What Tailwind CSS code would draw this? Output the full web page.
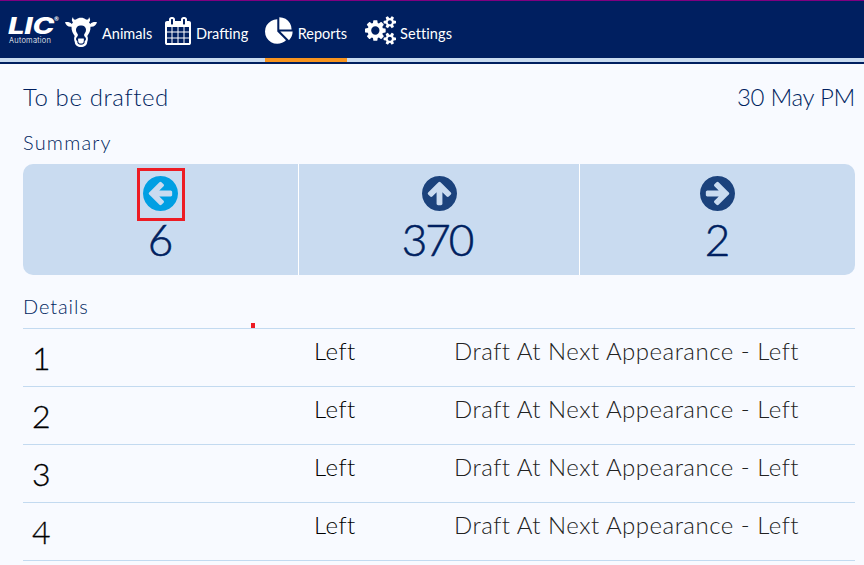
<!DOCTYPE html>
<html lang="en">
<head>
<meta charset="utf-8">
<title>LIC Automation - Reports</title>
<script src="https://cdn.jsdelivr.net/npm/@tailwindcss/browser@4"></script>
</head>
<body class="h-[565px] w-[864px] overflow-hidden bg-[#f8faff] font-['Lato','Open_Sans',sans-serif] font-light text-[#001f60]">
<svg class="hidden">
  <symbol id="arrow" viewBox="128 128 1536 1536"><path d="M1408 960v-128q0-26-19-45t-45-19h-502l189-189q19-19 19-45t-19-45l-91-91q-18-18-45-18t-45 18l-362 362-91 91q-18 18-18 45t18 45l91 91 362 362q18 18 45 18t45-18l91-91q18-18 18-45t-18-45l-189-189h502q26 0 45-19t19-45zm256-64q0 209-103 385.500t-279.500 279.500-385.500 103-385.500-103-279.500-279.500-103-385.500 103-385.500 279.500-279.500 385.500-103 385.500 103 279.500 279.500 103 385.500z"/></symbol>
</svg>
<header class="h-16 border-t border-b-2 border-t-[#800080] border-b-[#001f60] bg-[#001f60] text-white">
  <div class="flex h-[61px] border-b-4 border-[#c9dbf0] pl-2">
    <div class="w-[57px] pt-[14px]">
      <div class="flex h-[20px] items-start">
        <span class="inline-block w-[46px] origin-left scale-x-[1.25] font-['Inter'] text-[23.500px] leading-[22px] font-extrabold tracking-[-0.2px] italic">LIC</span>
        <span class="text-[6px] leading-[8px] font-bold">®</span>
      </div>
      <div class="pt-px pl-px font-['Inter'] text-[7.500px] leading-[10px] font-light tracking-[0.25px]">Automation</div>
    </div>
    <nav class="flex text-[14.500px] font-normal">
      <a class="flex h-[61px] w-[100px]">
        <svg class="mt-[15px] h-8 w-8" viewBox="0 0 32 32" fill="#fff">
          <path d="M8 1C6.600 2.800 6.400 5 8 6.300L6.800 8C5 6 2 5.800 0 6.300C.8 9.300 3 11 6.500 10.700C6.300 14.500 8 17.500 9.700 20C8.800 22 9 24 9.800 26C10 29.500 12.500 31 16 31S22 29.500 22.200 26C23 24 23.200 22 22.300 20C24 17.500 25.700 14.500 25.500 10.700C29 11 31.200 9.300 32 6.300C30 5.800 27 6 25.200 8L24 6.300C25.600 5 25.400 2.800 24 1C24 3 22.800 4 21 3.500C19.500 2.300 18 1.800 16 1.800S12.500 2.300 11 3.500C9.200 4 8 3 8 1Z"/>
          <path fill="#001f60" d="M12.500 10.500C14 9.300 18 9.300 19.500 10.500C21.500 12 21.500 15.500 19.700 17.500C18.500 19 19.200 20 20.500 21.500C21.500 23 20.800 24.500 19.700 25C20 27.500 18.500 28.700 16 28.700S12 27.500 12.300 25C11.200 24.500 10.500 23 11.500 21.500C12.800 20 13.500 19 12.300 17.500C10.500 15.500 10.500 12 12.500 10.500Z"/>
          <path d="M13.300 22.500H18.700C19.200 23.800 18.700 25 18.600 26C18.300 27.300 17.500 27.600 16 27.600S13.700 27.300 13.400 26C13.300 25 12.800 23.800 13.300 22.500Z"/>
        </svg>
        <span class="ml-[5px] pt-[23px] leading-5">Animals</span>
      </a>
      <a class="flex h-[61px] w-[100px]">
        <svg class="mt-[16px] h-7 w-[26px]" viewBox="64 0 1664 1792" fill="#fff"><path d="M192 1664h288v-288h-288v288zm352 0h320v-288h-320v288zm-352-352h288v-320h-288v320zm352 0h320v-320h-320v320zm-352-384h288v-288h-288v288zm736 736h320v-288h-320v288zm-384-736h320v-288h-320v288zm768 736h288v-288h-288v288zm-384-352h320v-320h-320v320zm-352-864v-288q0-13-9.500-22.500t-22.500-9.500h-64q-13 0-22.500 9.500t-9.500 22.500v288q0 13 9.500 22.500t22.500 9.500h64q13 0 22.500-9.500t9.500-22.500zm736 864h288v-320h-288v320zm-384-384h320v-288h-320v288zm384 0h288v-288h-288v288zm32-480v-288q0-13-9.500-22.500t-22.500-9.500h-64q-13 0-22.500 9.500t-9.500 22.500v288q0 13 9.500 22.500t22.500 9.500h64q13 0 22.500-9.500t9.500-22.500zm384-64v1280q0 52-38 90t-90 38h-1408q-52 0-90-38t-38-90v-1280q0-52 38-90t90-38h128v-96q0-66 47-113t113-47h64q66 0 113 47t47 113v96h384v-96q0-66 47-113t113-47h64q66 0 113 47t47 113v96h128q52 0 90 38t38 90z"/></svg>
        <span class="ml-[5px] pt-[23px] leading-5">Drafting</span>
      </a>
      <a class="flex h-[61px] w-[82px] border-b-4 border-[#f7931e]">
        <svg class="mt-[16px] h-[27px] w-7" viewBox="0 0 1728 1664" fill="#fff"><path d="M768 890l546 546q-106 108-247.500 168t-298.500 60q-209 0-385.500-103t-279.500-279.500-103-385.500 103-385.500 279.500-279.500 385.500-103v762zm187 6h773q0 157-60 298.500t-168 247.500zm709-128h-768v-768q209 0 385.500 103t279.500 279.500 103 385.500z"/></svg>
        <span class="ml-[5px] pt-[23px] leading-5">Reports</span>
      </a>
      <a class="ml-[18px] flex h-[61px]">
        <svg class="mt-[15px] h-[29px] w-[31px]" viewBox="-64 0 1920 1792" fill="#fff"><path d="M832 896q0-106-75-181t-181-75-181 75-75 181 75 181 181 75 181-75 75-181zm768 512q0-52-38-90t-90-38-90 38-38 90q0 53 37.500 90.500t90.500 37.500 90.500-37.500 37.500-90.500zm0-1024q0-52-38-90t-90-38-90 38-38 90q0 53 37.500 90.500t90.500 37.500 90.500-37.500 37.500-90.500zm-384 421v185q0 10-7 19.500t-16 10.500l-155 24q-11 35-32 76 34 48 90 115 7 11 7 20 0 12-7 19-23 30-82.500 89.500t-78.500 59.500q-11 0-21-7l-115-90q-37 19-77 31-11 108-23 155-7 24-30 24h-186q-11 0-20-7.500t-10-17.500l-23-153q-34-10-75-31l-118 89q-7 7-20 7-11 0-21-8-144-133-144-160 0-9 7-19 10-14 41-53t47-61q-23-44-35-82l-152-24q-10-1-17-9.500t-7-19.500v-185q0-10 7-19.500t16-10.500l155-24q11-35 32-76-34-48-90-115-7-11-7-20 0-12 7-20 22-30 82-89t79-59q11 0 21 7l115 90q34-18 77-32 11-108 23-154 7-24 30-24h186q11 0 20 7.500t10 17.500l23 153q34 10 75 31l118-89q8-7 20-7 11 0 21 8 144 133 144 160 0 8-7 19-12 16-42 54t-45 60q23 48 34 82l152 23q10 2 17 10.500t7 19.500zm640 533v140q0 16-149 31-12 27-30 52 51 113 51 138 0 4-4 7-122 71-124 71-8 0-46-47t-52-68q-20 2-30 2t-30-2q-14 21-52 68t-46 47q-2 0-124-71-4-3-4-7 0-25 51-138-18-25-30-52-149-15-149-31v-140q0-16 149-31 13-29 30-52-51-113-51-138 0-4 4-7 4-2 35-20t59-34 30-16q8 0 46 46.500t52 67.500q20-2 30-2t30 2q51-71 92-112l6-2q4 0 124 70 4 3 4 7 0 25-51 138 17 23 30 52 149 15 149 31zm0-1024v140q0 16-149 31-12 27-30 52 51 113 51 138 0 4-4 7-122 71-124 71-8 0-46-47t-52-68q-20 2-30 2t-30-2q-14 21-52 68t-46 47q-2 0-124-71-4-3-4-7 0-25 51-138-18-25-30-52-149-15-149-31v-140q0-16 149-31 13-29 30-52-51-113-51-138 0-4 4-7 4-2 35-20t59-34 30-16q8 0 46 46.500t52 67.500q20-2 30-2t30 2q51-71 92-112l6-2q4 0 124 70 4 3 4 7 0 25-51 138 17 23 30 52 149 15 149 31z"/></svg>
        <span class="ml-1 pt-[23px] leading-5 tracking-[0.1px]">Settings</span>
      </a>
    </nav>
  </div>
</header>
<main class="pr-[9px] pl-[23px]">
  <div class="flex h-[65px] justify-between pt-[17px] text-[24px] leading-8">
    <h1 class="tracking-[0.6px]">To be drafted</h1>
    <span class="tracking-[-0.3px]">30 May PM</span>
  </div>
  <h2 class="h-[35px] text-[20px] leading-[26px] tracking-[1.2px]">Summary</h2>
  <section class="grid h-[111px] grid-cols-[276px_281px_275px] overflow-hidden rounded-[10px] bg-[#c9dbf0] text-[44px]">
    <div class="flex flex-col items-center border-r border-white pt-1">
      <div class="flex h-[53px] w-12 justify-center border-3 border-[#ed1c24] pt-[5px]"><svg class="h-[35px] w-[35px]" fill="#009fe3"><use href="#arrow"/></svg></div>
      <span class="-mt-[8px] leading-[53px] [-webkit-text-stroke:0.6px_#001f60]">6</span>
    </div>
    <div class="flex flex-col items-center border-r border-white pt-3">
      <svg class="h-[35px] w-[35px] rotate-90" fill="#1b427c"><use href="#arrow"/></svg>
      <span class="mt-[2px] -ml-1 leading-[53px] tracking-[-2px] [-webkit-text-stroke:0.6px_#001f60]">370</span>
    </div>
    <div class="flex flex-col items-center pt-3">
      <svg class="h-[35px] w-[35px] rotate-180" fill="#1b427c"><use href="#arrow"/></svg>
      <span class="mt-[2px] leading-[53px] [-webkit-text-stroke:0.6px_#001f60]">2</span>
    </div>
  </section>
  <div class="relative h-[53px] pt-[18px]">
    <h2 class="text-[20px] leading-[26px] tracking-[0.9px]">Details</h2>
    <i class="absolute bottom-0 left-[228px] h-[5px] w-1 bg-[#ed1c24]"></i>
  </div>
  <ul class="border-b border-[#c3daf0] text-[24px] text-black">
    <li class="grid h-[58px] grid-cols-[291px_140px_1fr] border-t border-[#c3daf0]"><span class="pt-[9px] pl-[9px] text-[32px] leading-10 [-webkit-text-stroke:0.3px_black]">1</span><span class="pt-[6px] leading-8 tracking-[0.5px]">Left</span><span class="pt-[6px] leading-8 tracking-[0.5px] text-[#222]">Draft At Next Appearance - Left</span></li>
    <li class="grid h-[58px] grid-cols-[291px_140px_1fr] border-t border-[#c3daf0]"><span class="pt-[9px] pl-[9px] text-[32px] leading-10 [-webkit-text-stroke:0.3px_black]">2</span><span class="pt-[6px] leading-8 tracking-[0.5px]">Left</span><span class="pt-[6px] leading-8 tracking-[0.5px] text-[#222]">Draft At Next Appearance - Left</span></li>
    <li class="grid h-[58px] grid-cols-[291px_140px_1fr] border-t border-[#c3daf0]"><span class="pt-[9px] pl-[9px] text-[32px] leading-10 [-webkit-text-stroke:0.3px_black]">3</span><span class="pt-[6px] leading-8 tracking-[0.5px]">Left</span><span class="pt-[6px] leading-8 tracking-[0.5px] text-[#222]">Draft At Next Appearance - Left</span></li>
    <li class="grid h-[58px] grid-cols-[291px_140px_1fr] border-t border-[#c3daf0]"><span class="pt-[9px] pl-[9px] text-[32px] leading-10 [-webkit-text-stroke:0.3px_black]">4</span><span class="pt-[6px] leading-8 tracking-[0.5px]">Left</span><span class="pt-[6px] leading-8 tracking-[0.5px] text-[#222]">Draft At Next Appearance - Left</span></li>
  </ul>
</main>
</body>
</html>
